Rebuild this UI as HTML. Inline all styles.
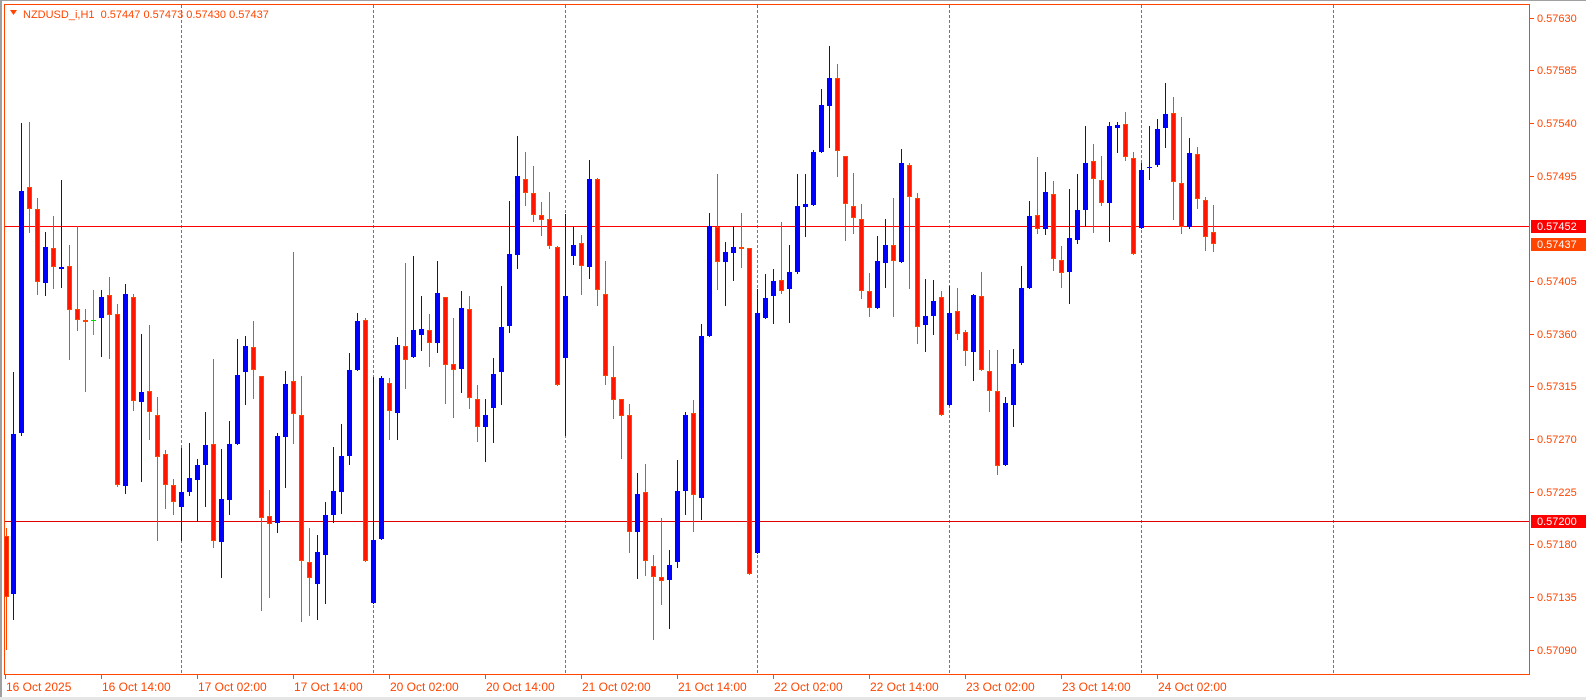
<!DOCTYPE html>
<html><head><meta charset="utf-8"><style>
html,body{margin:0;padding:0;background:#fff;width:1586px;height:700px;overflow:hidden}
svg{display:block}
text{font-family:"Liberation Sans",sans-serif}
</style></head><body>
<svg id="s" width="1586" height="700" xmlns="http://www.w3.org/2000/svg">
<rect x="0" y="0" width="1586" height="700" fill="#fff"/>
<rect x="0" y="0" width="1586" height="1" fill="#a0a0a0"/>
<rect x="0" y="0" width="2" height="700" fill="#a0a0a0"/>
<rect x="0" y="697" width="1586" height="3" fill="#e6e6e6"/>
<g id="grid"></g>
<line x1="4" y1="226.5" x2="1529" y2="226.5" stroke="#ff0000" stroke-width="1"/>
<line x1="4" y1="521.5" x2="1529" y2="521.5" stroke="#e00000" stroke-width="1"/>
<g id="candles"></g>
<rect x="4.5" y="4.5" width="1525" height="670" fill="none" stroke="#ff4500" stroke-width="1"/>
<g id="axis"></g>
<polygon points="10,10 17,10 13.5,15" fill="#ff4500"/>
<text x="23" y="18" font-size="11" fill="#ff4500">NZDUSD_i,H1&#160;&#160;0.57447 0.57473 0.57430 0.57437</text>
</svg>
<script>
var NS="http://www.w3.org/2000/svg";
function el(p,t,a,txt){var e=document.createElementNS(NS,t);for(var k in a)e.setAttribute(k,a[k]);if(txt)e.textContent=txt;p.appendChild(e);return e;}
var grid=document.getElementById('grid'),cg=document.getElementById('candles'),ax=document.getElementById('axis');
for(var k=0;k<7;k++){var x=181.5+192*k;el(grid,'line',{x1:x,y1:5,x2:x,y2:674,stroke:'#ff4500','stroke-width':1,'stroke-dasharray':'3,2'});}
var D="r 523 531 591 643|b 369 430 588 613|b 122 189 429 431|r 121 185 207 230|r 196 207 279 291|b 230 245 280 292|r 214 246 265 285|b 178 265 267 284|r 243 264 307 356|r 224 306 317 327|r 306 317 318 387|g 287 317 318 331|b 287 294 315 353|r 274 292 312 355|r 301 311 480 481|b 281 291 481 488|r 291 294 397 406|b 331 388 398 476|r 322 387 408 435|r 393 411 453 535|r 446 450 480 503|r 474 480 497 509|b 444 487 502 535|b 439 473 487 490|b 455 461 475 516|b 408 441 461 501|r 356 440 536 542|b 445 494 537 571|b 417 440 495 509|b 336 371 440 440|b 333 343 369 400|r 318 344 367 394|r 372 372 513 604|r 485 511 519 591|b 429 432 518 527|b 368 380 433 482|r 250 377 410 439|r 372 411 556 615|r 523 557 572 609|b 530 547 578 613|b 497 510 550 597|b 443 486 510 517|b 420 452 487 508|b 350 367 452 460|b 310 318 367 367|r 315 317 556 556|b 373 535 597 597|b 372 374 534 534|r 374 379 407 435|b 334 342 409 435|r 261 343 357 384|b 254 327 354 354|b 293 326 332 347|r 311 327 340 363|b 259 290 340 349|r 294 294 362 399|r 315 361 367 413|b 288 305 366 388|r 293 306 394 404|r 381 395 423 437|b 395 411 423 457|b 355 370 404 438|b 283 324 369 400|b 199 252 323 329|b 135 175 253 266|r 151 177 191 203|r 165 191 213 219|r 200 213 218 233|r 190 217 244 246|r 244 245 381 381|b 212 293 355 431|b 225 243 254 262|r 233 241 264 291|b 159 177 265 275|r 176 177 287 302|r 259 291 372 380|r 343 373 396 414|r 395 395 412 454|r 400 411 527 547|b 468 489 527 572|r 460 487 556 569|r 550 561 571 633|r 513 571 575 598|b 545 560 574 622|b 456 486 557 562|b 408 411 486 509|r 396 409 490 526|b 321 333 493 514|b 211 224 333 333|r 173 225 260 286|b 240 250 260 302|b 224 245 251 277|r 211 245 247 265|r 246 246 568 568|b 286 310 548 548|b 272 295 315 315|b 267 278 293 320|r 220 277 288 290|b 243 270 286 319|b 173 204 270 271|b 173 202 205 234|b 149 151 203 203|b 88 104 151 151|b 46 78 105 146|r 64 78 150 175|r 155 155 202 238|r 172 204 216 231|r 202 217 288 295|r 271 288 305 313|b 234 259 305 305|b 217 243 261 284|r 196 243 259 313|b 148 162 260 260|r 162 164 195 285|r 191 196 324 340|b 276 313 322 348|b 277 298 313 331|r 288 294 411 411|b 283 310 401 401|r 285 308 331 336|r 327 329 348 362|b 291 292 349 376|r 270 293 367 367|r 347 368 387 407|r 347 387 462 469|b 393 399 461 461|b 346 361 401 422|b 264 285 360 361|b 199 214 285 285|r 156 213 227 231|b 171 190 227 232|r 179 192 257 268|r 244 258 271 284|b 187 236 270 300|b 173 208 238 241|b 125 162 208 224|r 143 160 177 230|r 155 178 201 203|b 121 125 201 239|b 121 124 127 151|r 111 123 156 159|r 151 157 252 252|b 162 169 226 226|b 125 166 167 177|b 118 128 164 165|b 82 113 127 146|r 96 112 180 217|r 116 181 225 231|b 137 152 225 226|r 146 153 197 206|r 195 198 235 248|r 203 230 242 249".split('|');
function Y(y){return Math.round(226+(y-224)*1.0103);}
D.forEach(function(s,i){var p=s.split(' ');var t=p[0],wt=Y(+p[1]),bt=Y(+p[2]),bb=Y(+p[3]),wb=Y(+p[4]);
 var x=5+8*i;if(i==0)x=6;
 var wc=t=='b'?'#0000ff':(t=='g'?'#00dd00':'#ff4500');
 el(cg,'rect',{x:x,y:wt,width:1,height:Math.max(1,wb-wt+1),fill:wc});
 if(t=='g'){el(cg,'rect',{x:x-2,y:bt,width:5,height:1,fill:wc});return;}
 var h=Math.max(1,bb-bt);
 if(t=='b'){el(cg,'rect',{x:x-2,y:bt,width:5,height:h,fill:'#0000ff'});}
 else{ if(h<=2){el(cg,'rect',{x:x-2,y:bt,width:5,height:2,fill:'#ff4500'});}
  else{el(cg,'rect',{x:x-2,y:bt,width:5,height:h,fill:'#ff4500'});el(cg,'rect',{x:x-1,y:bt+1,width:3,height:h-2,fill:'#ff1500'});}}
});
function PY(p){return 226+(0.57452-p)*117060;}
var lv=[0.57630,0.57585,0.57540,0.57495,0.57405,0.57360,0.57315,0.57270,0.57225,0.57180,0.57135,0.57090];
lv.forEach(function(v){var y=Math.round(PY(v));el(ax,'rect',{x:1530,y:y,width:4,height:1,fill:'#ff4500'});el(ax,'text',{x:1537,y:y+4,'font-size':11,fill:'#ff4500'},v.toFixed(5));});
function box(v,c){var y=Math.round(PY(v));el(ax,'rect',{x:1531,y:y-6,width:55,height:13,fill:c});el(ax,'text',{x:1537,y:y+4,'font-size':11,fill:'#fff'},v.toFixed(5));}
box(0.57452,'#ff0000');box(0.57437,'#ff4500');box(0.57200,'#ff0000');
var dl=["16 Oct 2025","16 Oct 14:00","17 Oct 02:00","17 Oct 14:00","20 Oct 02:00","20 Oct 14:00","21 Oct 02:00","21 Oct 14:00","22 Oct 02:00","22 Oct 14:00","23 Oct 02:00","23 Oct 14:00","24 Oct 02:00"];
dl.forEach(function(s,k){var x=5+96*k;el(ax,'rect',{x:x,y:675,width:1,height:4,fill:'#ff4500'});el(ax,'text',{x:x+1,y:691,'font-size':12,fill:'#ff4500'},s);});
</script>
</body></html>
